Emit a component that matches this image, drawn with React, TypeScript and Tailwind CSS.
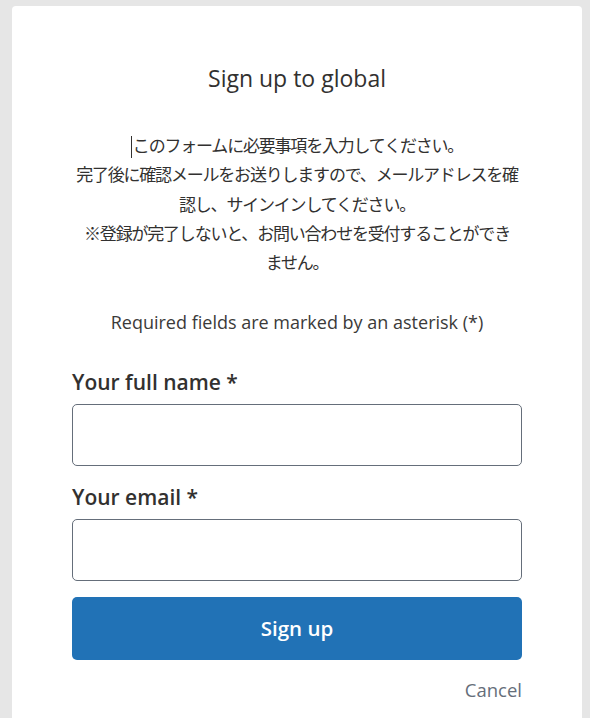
export default function App() {
    const intro = [
        'このフォームに必要事項を入力してください。',
        '完了後に確認メールをお送りしますので、メールアドレスを確',
        '認し、サインインしてください。',
        '※登録が完了しないと、お問い合わせを受付することができ',
        'ません。',
    ];

    return (
        <div className="min-h-screen bg-[#e6e6e6] pt-[6px] pl-[12px] pr-[8px] font-['Open_Sans',sans-serif]">
            <div className="bg-white rounded-t-[4px] min-h-[712px] px-[60px] pt-[56px]">
                <h1 className="text-center text-[23px] leading-[32px] text-[#323130]">
                    Sign up to global
                </h1>

                <div className="mt-[36px] text-center text-[17px] tracking-[-1.2px] leading-[29.25px] text-[#323130] font-['Noto_Sans_CJK_JP',sans-serif]">
                    {intro.map((line, i) => (
                        <div key={i} className="whitespace-nowrap">
                            {i === 0 && <span className="inline-block w-px h-[22px] bg-[#323130] align-middle mr-[1px]" />}
                            {line}
                        </div>
                    ))}
                </div>

                <p className="mt-[33px] text-center text-[18px] leading-[26px] text-[#3b3a39]">
                    Required fields are marked by an asterisk (*)
                </p>

                <form className="mt-[33px]" onSubmit={(e) => e.preventDefault()}>
                    <label htmlFor="fullName" className="block text-[21px] leading-[28px] font-semibold text-[#323130]">
                        Your full name *
                    </label>
                    <input
                        id="fullName"
                        type="text"
                        className="mt-[8px] block w-full h-[62px] border border-[#656e7a] rounded-[5px] px-3"
                    />

                    <label htmlFor="email" className="block mt-[17px] text-[21px] leading-[28px] font-semibold text-[#323130]">
                        Your email *
                    </label>
                    <input
                        id="email"
                        type="email"
                        className="mt-[8px] block w-full h-[62px] border border-[#656e7a] rounded-[5px] px-3"
                    />

                    <button
                        type="submit"
                        className="mt-[16px] block w-full h-[63px] rounded-[5px] bg-[#2172b6] text-white text-[20.5px] font-semibold"
                    >
                        Sign up
                    </button>

                    <div className="mt-[17px] text-right">
                        <a href="#" className="text-[18.5px] leading-[26px] text-[#656e7a]">
                            Cancel
                        </a>
                    </div>
                </form>
            </div>
        </div>
    );
}
